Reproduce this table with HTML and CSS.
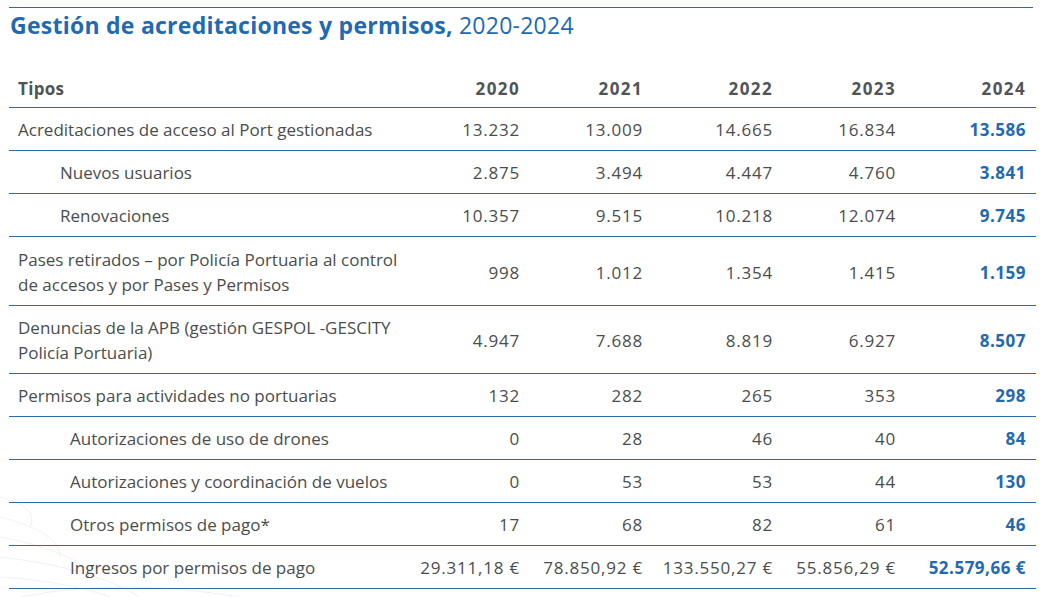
FILE: index.html
```html
<!DOCTYPE html>
<html lang="es">
<head>
<meta charset="utf-8">
<title>Gestión de acreditaciones y permisos</title>
<link rel="stylesheet" href="styles.css">
</head>
<body>
<svg class="deco" width="260" height="140" viewBox="0 0 260 140" aria-hidden="true">
  <g fill="none" stroke="#edf2f8" stroke-width="1">
    <path d="M0 40 Q40 50 30 70"/>
    <path d="M0 60 Q60 75 60 100"/>
    <path d="M0 80 Q80 95 100 125"/>
    <path d="M0 100 Q90 110 140 140"/>
    <path d="M0 120 Q70 125 110 140"/>
    <path d="M20 140 Q120 120 240 140"/>
  </g>
</svg>
<main class="page">
  <h1 class="title"><strong>Gestión de acreditaciones y permisos,</strong> 2020-2024</h1>
  <table class="data">
    <colgroup>
      <col class="c-type"><col class="c-y"><col class="c-y"><col class="c-y2"><col class="c-y"><col class="c-y2">
    </colgroup>
    <thead>
      <tr><th class="lbl">Tipos</th><th>2020</th><th>2021</th><th>2022</th><th>2023</th><th>2024</th></tr>
    </thead>
    <tbody>
      <tr><td class="lbl">Acreditaciones de acceso al Port gestionadas</td><td>13.232</td><td>13.009</td><td>14.665</td><td>16.834</td><td class="hl">13.586</td></tr>
      <tr><td class="lbl ind1">Nuevos usuarios</td><td>2.875</td><td>3.494</td><td>4.447</td><td>4.760</td><td class="hl">3.841</td></tr>
      <tr><td class="lbl ind1">Renovaciones</td><td>10.357</td><td>9.515</td><td>10.218</td><td>12.074</td><td class="hl">9.745</td></tr>
      <tr class="tall"><td class="lbl">Pases retirados – por Policía Portuaria al control de accesos y por Pases y Permisos</td><td>998</td><td>1.012</td><td>1.354</td><td>1.415</td><td class="hl">1.159</td></tr>
      <tr><td class="lbl">Denuncias de la APB (gestión GESPOL -GESCITY Policía Portuaria)</td><td>4.947</td><td>7.688</td><td>8.819</td><td>6.927</td><td class="hl">8.507</td></tr>
      <tr><td class="lbl">Permisos para actividades no portuarias</td><td>132</td><td>282</td><td>265</td><td>353</td><td class="hl">298</td></tr>
      <tr><td class="lbl ind2">Autorizaciones de uso de drones</td><td>0</td><td>28</td><td>46</td><td>40</td><td class="hl">84</td></tr>
      <tr><td class="lbl ind2">Autorizaciones y coordinación de vuelos</td><td>0</td><td>53</td><td>53</td><td>44</td><td class="hl">130</td></tr>
      <tr><td class="lbl ind2">Otros permisos de pago*</td><td>17</td><td>68</td><td>82</td><td>61</td><td class="hl">46</td></tr>
      <tr><td class="lbl ind2">Ingresos por permisos de pago</td><td>29.311,18 €</td><td>78.850,92 €</td><td>133.550,27 €</td><td>55.856,29 €</td><td class="hl">52.579,66 €</td></tr>
    </tbody>
  </table>
</main>
</body>
</html>
```
FILE: styles.css
```css
html, body {
  margin: 0;
  padding: 0;
  background: #ffffff;
}
body {
  position: relative;
  width: 1043px;
  height: 597px;
  overflow: hidden;
  font-family: "Open Sans", "Noto Sans", "Liberation Sans", sans-serif;
  color: #4a4d4e;
}
.deco {
  position: absolute;
  left: 0;
  bottom: 0;
  z-index: 0;
}
.page {
  position: relative;
  z-index: 1;
  margin: 7px 10px 0 9px;
  border-top: 1px solid #2f69a5;
}
.title {
  margin: 0;
  padding: 2px 0 0 1px;
  font-size: 23px;
  line-height: 30px;
  font-weight: 400;
  color: #1f6ab0;
  letter-spacing: 0.25px;
}
.title strong {
  font-weight: 700;
}
.data {
  width: 1024px;
  margin-top: 31px;
  border-collapse: collapse;
  table-layout: fixed;
  font-size: 17px;
  line-height: 25px;
}
.c-type { width: 398px; }
.c-y { width: 123px; }
.c-y2 { width: 130px; }
.data th,
.data td {
  padding: 9px 10px 8px 9px;
  text-align: right;
  vertical-align: middle;
  border-bottom: 1px solid #2f6aa8;
  white-space: nowrap;
  letter-spacing: 0.8px;
}
.data th {
  padding-top: 5px;
  padding-bottom: 6px;
  font-weight: 700;
  color: #4f5556;
  letter-spacing: 1.4px;
}
.data .lbl {
  text-align: left;
  white-space: normal;
  letter-spacing: 0;
  padding-right: 0;
}
.data .tall td {
  padding-top: 10px;
}
.data th.lbl {
  letter-spacing: 0.3px;
}
.data .ind1 { padding-left: 51px; }
.data .ind2 { padding-left: 61px; }
.data td.hl {
  font-weight: 700;
  color: #1f6ab0;
  letter-spacing: 0.5px;
}
```
